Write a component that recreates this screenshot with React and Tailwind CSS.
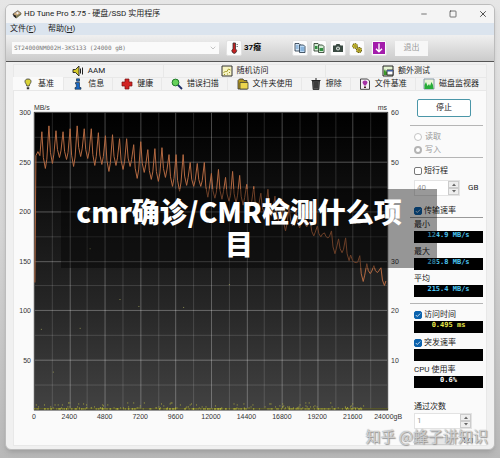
import { useState } from "react";
import { Minus, Square, X, ChevronDown } from "lucide-react";

const PLOT_W = 356;
const PLOT_H = 299;

// MB/s, one peak and the dip after it for each step of the disk
const peaks = [
  280, 286, 281, 280, 283, 286, 283, 283, 279, 276, 277, 273, 273, 267, 270, 262,
  263, 264, 257, 257, 257, 249, 248, 249, 238, 242, 234, 240, 236, 227, 225, 218,
  222, 215, 210, 205, 200, 195, 190, 185, 178, 180, 172, 173, 150, 155, 147, 145,
  143,
];
const dips = [
  243, 248, 254, 252, 245, 255, 253, 246, 247, 240, 246, 242, 245, 233, 239, 232,
  230, 234, 225, 220, 226, 225, 225, 214, 213, 212, 210, 208, 206, 204, 200, 198,
  195, 190, 180, 185, 183, 184, 175, 174, 173, 157, 158, 150, 148, 129, 137, 138,
  125,
];

const toY = (v) => PLOT_H - (v / 300) * PLOT_H;

const buildLine = () => {
  const pts = [
    [1, toY(128)],
    [2, toY(256)],
    [4, toY(260)],
    [6, toY(256)],
  ];
  peaks.forEach((p, i) => {
    const x = 8 + i * 7.1;
    const d = dips[i];
    pts.push([x, toY(p)]);
    pts.push([x + 1.5, toY(d + (p - d) * 0.3)]);
    pts.push([x + 3.5, toY(d)]);
    pts.push([x + 5, toY(d + (p - d) * 0.25)]);
  });
  return pts
    .filter(([x]) => x < PLOT_W)
    .map(([x, y]) => `${x.toFixed(1)},${y.toFixed(1)}`)
    .join(" ");
};

const buildDots = () => {
  let seed = 17;
  const rand = () => {
    seed = (seed * 16807) % 2147483647;
    return seed / 2147483647;
  };
  const dots = [];
  for (let i = 0; i < 330; i++) {
    dots.push([rand() * 332, 298 - Math.floor(rand() ** 5 * 7)]);
  }
  return dots;
};

const strays = [
  [56, 137], [86, 188], [105, 195], [150, 196], [196, 173], [46, 217], [7, 218], [19, 261],
];

const line = buildLine();
const dots = buildDots();

function Chart() {
  return (
    <svg viewBox="-20 -12 398 325" className="block w-full" fontFamily="Liberation Sans, Arial, sans-serif" fontSize="7" fill="#333">
      <defs>
        <linearGradient id="plot" x1="0" y1="0" x2="0" y2="1">
          <stop offset="0" stopColor="#000" />
          <stop offset="0.3" stopColor="#101010" />
          <stop offset="0.65" stopColor="#262626" />
          <stop offset="1" stopColor="#424242" />
        </linearGradient>
      </defs>
      <rect width={PLOT_W} height={PLOT_H} fill="url(#plot)" />
      {Array.from({ length: 19 }, (_, i) => (
        <rect
          key={i}
          x={Math.round(((i + 1) * PLOT_W) / 20)}
          width="1"
          height={PLOT_H}
          fill="#fff"
          opacity={i % 2 ? 0.28 : 0.14}
        />
      ))}
      {Array.from({ length: 11 }, (_, i) => (
        <rect
          key={i}
          y={Math.round(((i + 1) * PLOT_H) / 12)}
          width={PLOT_W}
          height="1"
          fill="#fff"
          opacity={i % 2 ? 0.3 : 0.14}
        />
      ))}
      <path d={`M0.5 ${PLOT_H}V0.5H355.5V${PLOT_H}`} fill="none" stroke="#555" />
      <polyline points={line} fill="none" stroke="#b56a42" strokeWidth="1" />
      <rect y="298" width={PLOT_W} height="1" fill="#66661c" />
      <rect y="299" width={PLOT_W} height="1" fill="#111" />
      {dots.map(([x, y], i) => (
        <rect key={i} x={x} y={y} width="1" height="1" fill="#c8c83c" opacity="0.75" />
      ))}
      {strays.map(([x, y], i) => (
        <rect key={i} x={x} y={y} width="1" height="1" fill="#8a8a50" />
      ))}
      <text x="0" y="-2">MB/s</text>
      <text x="355" y="-2" textAnchor="end">ms</text>
      {[300, 250, 200, 150, 100, 50].map((v) => (
        <text key={v} x="-3" y={toY(v) + 3} textAnchor="end">{v}</text>
      ))}
      {[60, 50, 40, 30, 20, 10].map((v) => (
        <text key={v} x="359" y={toY(v * 5) + 3}>{v}</text>
      ))}
      {Array.from({ length: 11 }, (_, i) => (
        <text key={i} x={(i * PLOT_W) / 10} y="309" textAnchor="middle">
          {i * 2400}
          {i === 10 ? "gB" : ""}
        </text>
      ))}
    </svg>
  );
}

function Icon({ name, className = "size-3" }) {
  const shapes = {
    drive: (
      <>
        <path d="M1 6l6-4 4 3-6 6z" fill="#c9a77a" stroke="#333" strokeWidth=".7" />
        <path d="M1 6l4 2v3L2 9z" fill="#222" />
        <path d="M5 8l6-3v2l-6 4z" fill="#775" />
        <circle cx="6.5" cy="5" r="1.3" fill="#eee" />
      </>
    ),
    speaker: (
      <>
        <path d="M1 4.500h2.500L7 1v10L3.500 7.500H1z" fill="#d5c92c" stroke="#222" strokeWidth=".9" />
        <path d="M8.500 3.500v5M10.500 2.500v7" stroke="#222" />
      </>
    ),
    random: (
      <>
        <path d="M1 1h10v10H1z" fill="#f7f4c4" stroke="#333" />
        <path d="M2.500 8l2-2 1 1 2-3 2 1M3 9.500h1M6 9h1M8 7.500h1" stroke="#a39c28" fill="none" />
      </>
    ),
    extra: (
      <>
        <path d="M1 1h10v10H1z" fill="#e4f2d2" stroke="#222" />
        <path d="M2 10V6l1-2 1 3 1-1v4z" fill="#3a9a2a" />
        <path d="M5 5h6v5H5z" fill="#fff" stroke="#333" />
        <path d="M5 5h6v1.500H5z" fill="#415b9b" />
      </>
    ),
    bulb: (
      <>
        <path d="M6 1c2 0 3 1 3 2.600C9 5 7.500 6 7.200 8H4.800C4.500 6 3 5 3 3.600 3 2 4 1 6 1z" fill="#d9d337" stroke="#333" strokeWidth=".8" />
        <path d="M4.800 9.200h2.400v2H4.800z" fill="#333" />
      </>
    ),
    info: (
      <path d="M4.500.8h3v2.400h-3zM3.500 4.500h4v5H9v1.700H3V9.500h1.300V6h-.8z" fill="#1767c5" stroke="#123" strokeWidth=".6" />
    ),
    health: <path d="M4 1h4v3h3v4H8v3H4V8H1V4h3z" fill="#d22424" stroke="#711" strokeWidth=".7" />,
    scan: (
      <>
        <circle cx="4.500" cy="4.500" r="3.400" fill="#66d25a" stroke="#217a2c" />
        <path d="M7 7l4 4" stroke="#1d2d66" strokeWidth="1.800" />
      </>
    ),
    folder: (
      <>
        <path d="M1 2.500L2.500 1H6l1 1.500h3V11H1z" fill="#b79a1e" stroke="#333" strokeWidth=".8" />
        <path d="M3 4.500h8V11H3z" fill="#ecd54d" stroke="#443" strokeWidth=".8" />
      </>
    ),
    trash: (
      <>
        <path d="M2.500 3h7l-.6 8.500H3.100z" fill="#555" stroke="#222" strokeWidth=".8" />
        <path d="M1.500 2.500h9M5 1h2M5 4v6M7 4v6" stroke="#222" />
      </>
    ),
    fileBench: (
      <>
        <path d="M1.500 1h7l2 2v8.300h-9z" fill="#f4f0f6" stroke="#333" strokeWidth=".9" />
        <path d="M6 2.500c1.800 0 2.500 1 2.500 2S7 6.500 7 7.500H5c0-1-1.500-2-1.500-3s.7-2 2.500-2z" fill="#a431a5" />
        <path d="M5 8.500h2V10H5z" fill="#422" />
      </>
    ),
    monitor: (
      <>
        <path d="M1 1h10v10H1z" fill="#e9f5d6" stroke="#89a" />
        <path d="M1.500 11V7L3 4l1.500 4L6 6l1 2 1.500-4L10 7l.5 4z" fill="#28ad38" />
      </>
    ),
    thermo: (
      <>
        <path d="M5 1h2.500v6a2.300 2.300 0 1 1-2.500 0z" fill="#c62020" stroke="#333" strokeWidth=".8" />
        <path d="M8.500 2.500h1.500M8.500 4.500h1.500" stroke="#555" strokeWidth=".7" />
      </>
    ),
    copyText: (
      <>
        <path d="M1 1.500h4L6.500 3v6H1z" fill="#d4e5f5" stroke="#234" strokeWidth=".8" />
        <path d="M5.500 3h4L11 4.500v6H5.500z" fill="#bcd9f3" stroke="#234" strokeWidth=".8" />
        <path d="M2 4h2.500M2 6h2.500M6.500 6H10M6.500 8H10" stroke="#3b7fbd" strokeWidth=".8" />
      </>
    ),
    copyImage: (
      <>
        <path d="M1 1.500h4L6.500 3v6H1z" fill="#d5ecd5" stroke="#232" strokeWidth=".8" />
        <path d="M5.500 3h4L11 4.500v6H5.500z" fill="#d5ecd5" stroke="#232" strokeWidth=".8" />
        <path d="M2 4h2.500v3H2zM6.500 6H10v3H6.500z" fill="#319040" />
      </>
    ),
    camera: (
      <>
        <path d="M1 3.500h2.500L4.500 2h3l1 1.500H11V10H1z" fill="#3a4a42" />
        <circle cx="6" cy="6.500" r="1.900" fill="#e1e9e5" />
        <circle cx="6" cy="6.500" r=".9" fill="#3a4a42" />
      </>
    ),
    gears: (
      <>
        <circle cx="4" cy="4" r="2.300" fill="#e0d32e" stroke="#766b12" strokeWidth="1.200" strokeDasharray="1.400 .5" />
        <circle cx="8" cy="8" r="2.500" fill="#d1c32a" stroke="#665c10" strokeWidth="1.200" strokeDasharray="1.400 .5" />
        <circle cx="4" cy="4" r=".7" fill="#544" />
        <circle cx="8" cy="8" r=".8" fill="#544" />
      </>
    ),
    down: (
      <>
        <path d="M0 0h12v12H0z" fill="#a31cab" />
        <path d="M6 1.500v8M3 6.800l3 3 3-3" stroke="#fff" strokeWidth="1.400" fill="none" />
      </>
    ),
  };
  return (
    <svg viewBox="0 0 12 12" className={`shrink-0 ${className}`} aria-hidden="true">
      {shapes[name]}
    </svg>
  );
}

function Tab({ icon, label, active }) {
  return (
    <button
      className={`flex min-w-0 items-center justify-center gap-1 whitespace-nowrap border-r border-[#e8e8e8] ${
        active ? "bg-[#fafafa]" : "border-t bg-[#f3f3f3]"
      }`}
    >
      <Icon name={icon} />
      {label}
    </button>
  );
}

function ToolButton({ icon, label }) {
  return (
    <button aria-label={label} className="flex size-4 items-center justify-center rounded-xs border border-[#e2e2e2] bg-[#fcfcfc]">
      <Icon name={icon} />
    </button>
  );
}

function Check({ label, checked, onChange }) {
  return (
    <label className="flex h-[13px] items-center gap-0.5">
      <input type="checkbox" checked={checked} onChange={onChange} className="peer sr-only" />
      <span className="flex size-2 items-center justify-center rounded-xs border border-[#777] bg-white peer-checked:border-[#0b62ad] peer-checked:bg-[#0b62ad]">
        {checked && (
          <svg viewBox="0 0 8 8" className="size-1.5">
            <path d="M1 4l2 2 4-4" stroke="#fff" fill="none" />
          </svg>
        )}
      </span>
      {label}
    </label>
  );
}

function Radio({ label, checked }) {
  return (
    <label className="flex h-[13px] items-center gap-[3px] text-[#999]">
      <input
        type="radio"
        name="mode"
        disabled
        defaultChecked={checked}
        className="size-2 appearance-none rounded-full border border-[#c4c4c4] bg-white checked:border-2 checked:border-[#b4b4b4]"
      />
      {label}
    </label>
  );
}

function Readout({ value, color }) {
  return (
    <output className={`block h-3 bg-black text-center font-['DejaVu_Sans_Mono',monospace] text-[7px] leading-[9px] font-bold ${color}`}>
      {value}
    </output>
  );
}

function Spinner({ label, value, width }) {
  return (
    <div className={`flex h-4 border border-[#e3e3e3] bg-white ${width}`}>
      <input aria-label={label} defaultValue={value} disabled className="w-0 flex-1 px-0.5 text-[#999]" />
      <div className="flex w-[11px] flex-col bg-[#eee]">
        <button aria-label="+" className="flex flex-1 items-center justify-center border border-[#ccc]">
          <svg viewBox="0 0 4 3" className="w-1"><path d="M0 3l2-2.500L4 3z" fill="#666" /></svg>
        </button>
        <button aria-label="-" className="flex flex-1 items-center justify-center border border-[#ccc]">
          <svg viewBox="0 0 4 3" className="w-1"><path d="M0 0l2 2.500L4 0z" fill="#666" /></svg>
        </button>
      </div>
    </div>
  );
}

function SidePanel() {
  const [opts, setOpts] = useState({ short: false, rate: true, access: true, burst: true });
  const toggle = (key) => setOpts({ ...opts, [key]: !opts[key] });

  return (
    <aside className="flex w-[76px] shrink-0 flex-col pt-2 pr-[3px] pl-1">
      <button className="mr-3 ml-[3px] h-[18px] rounded-xs border border-[#4a96a8] bg-white">停止</button>
      <hr className="-ml-1 mt-2 border-[#b5b5b5]" />
      <div className="mt-1">
        <Radio label="读取" />
        <Radio label="写入" checked />
      </div>
      <hr className="-ml-1 mt-px border-[#b5b5b5]" />
      <div className="mt-1.5">
        <Check label="短行程" checked={opts.short} onChange={() => toggle("short")} />
      </div>
      <div className="mt-[3px] flex items-center gap-2">
        <Spinner label="短行程" value="40" width="w-[46px]" />
        GB
      </div>
      <div className="mt-2">
        <Check label="传输速率" checked={opts.rate} onChange={() => toggle("rate")} />
      </div>
      <hr className="-ml-1 border-[#999]" />
      <div className="flex flex-col gap-0.5">
        {[
          ["最小", "124.9 MB/s"],
          ["最大", "285.8 MB/s"],
          ["平均", "215.4 MB/s"],
        ].map(([label, value]) => (
          <div key={label}>
            <p className="h-[13px] leading-[13px]">{label}</p>
            <Readout value={value} color="text-[#4cc6f4]" />
          </div>
        ))}
      </div>
      <hr className="-ml-1 mt-1.5 border-[#b5b5b5]" />
      <div className="mt-1">
        <Check label="访问时间" checked={opts.access} onChange={() => toggle("access")} />
        <Readout value="0.495 ms" color="text-[#e9e94b]" />
      </div>
      <div className="mt-[3px]">
        <Check label="突发速率" checked={opts.burst} onChange={() => toggle("burst")} />
        <Readout value="" color="text-white" />
      </div>
      <div className="mt-0.5">
        <p className="h-[13px] leading-[13px]">CPU 使用率</p>
        <Readout value="0.6%" color="text-white" />
      </div>
      <div className="mt-3">
        <p className="h-[13px] leading-[13px]">通过次数</p>
        <Spinner label="通过次数" value="1" width="w-[58px]" />
      </div>
      <div className="mt-2 flex items-center gap-2">
        <div className="h-2 w-10 border border-[#ccc] bg-[#e6e6e6]" />
        <span className="leading-2">1/1</span>
      </div>
    </aside>
  );
}

function App() {
  return (
    <div className="relative min-h-screen bg-linear-to-b from-[#e6e6e6] via-[#d6d6d6] to-[#b9b9b9] px-[5px] pt-1 pb-1 font-['Roboto','Noto_Sans_CJK_SC',sans-serif] text-[8px] leading-3 text-[#222]">
      <div className="overflow-hidden rounded-md border border-[#bcbcbc] bg-[#f0f0f0] shadow-md">
        <header className="flex h-[18px] items-center bg-[#f4f4f4] px-1.5">
          <Icon name="drive" className="size-2.5" />
          <h1 className="ml-0.5 flex-1">HD Tune Pro 5.75 - 硬盘/SSD 实用程序</h1>
          <div className="flex gap-[21px] text-[#333]">
            <button aria-label="最小化"><Minus className="size-2" /></button>
            <button aria-label="最大化"><Square className="size-2" /></button>
            <button aria-label="关闭"><X className="size-2.5" /></button>
          </div>
        </header>
        <nav className="flex h-3 items-center gap-3 bg-[#dbe4ee] px-1">
          <button>文件(<u>F</u>)</button>
          <button>帮助(<u>H</u>)</button>
        </nav>
        <div className="flex h-[27px] items-center border-b border-[#555] bg-linear-to-b from-[#f0f0f0] to-[#cbcbcb] pl-1.5">
          <div className="relative w-[207px]">
            <select aria-label="硬盘" className="block h-3 w-full appearance-none bg-[#fafafa] px-0.5 font-['DejaVu_Sans_Mono',monospace] text-[6px] leading-3 text-[#777]">
              <option>ST24000NM002H-3KS133 (24000 gB)</option>
            </select>
            <ChevronDown className="pointer-events-none absolute top-0.5 right-0.5 size-2 text-[#aaa]" />
          </div>
          <div className="ml-[7px] flex w-9 items-center gap-0.5 whitespace-nowrap">
            <ToolButton icon="thermo" label="温度" />
            <b className="text-black">37癈</b>
          </div>
          <div className="ml-[30px] flex gap-[3px]">
            <ToolButton icon="copyText" label="复制文本" />
            <ToolButton icon="copyImage" label="复制图像" />
            <ToolButton icon="camera" label="截图" />
            <ToolButton icon="gears" label="选项" />
          </div>
          <div className="ml-1.5">
            <ToolButton icon="down" label="保存" />
          </div>
          <button className="ml-2 h-[15px] w-[33px] bg-[#f7f7f7] text-[#999]">退出</button>
        </div>

        <main className="mx-[7px] mt-0.5 mb-[3px]">
          <div className="grid h-[13px] grid-cols-[150fr_162fr_161fr] border-l border-[#e8e8e8]">
            <Tab icon="speaker" label="AAM" />
            <Tab icon="random" label="随机访问" />
            <Tab icon="extra" label="额外测试" />
          </div>
          <div className="grid h-[13px] grid-cols-[51fr_49fr_49fr_66fr_73fr_49fr_65fr_71fr]">
            <Tab icon="bulb" label="基准" active />
            <Tab icon="info" label="信息" />
            <Tab icon="health" label="健康" />
            <Tab icon="scan" label="错误扫描" />
            <Tab icon="folder" label="文件夹使用" />
            <Tab icon="trash" label="擦除" />
            <Tab icon="fileBench" label="文件基准" />
            <Tab icon="monitor" label="磁盘监视器" />
          </div>
          <div className="flex border border-[#e8e8e8] bg-[#fafafa]">
            <div className="min-w-0 flex-1 pt-[9px]">
              <Chart />
            </div>
            <SidePanel />
          </div>
        </main>
      </div>

      <div className="absolute top-[189px] right-[63px] left-[61px] bg-black/40 pt-1.5 pr-8 pb-[9px] pl-3 text-center font-['Noto_Sans_CJK_SC',sans-serif] text-[28px] leading-8 font-black text-white">
        cmr确诊/CMR检测什么项目
      </div>
      <p className="absolute right-3 bottom-3 font-['Noto_Sans_CJK_SC',sans-serif] text-[15px] leading-5 text-white/60 [text-shadow:0_0_1px_#777,1px_1px_1px_#999]">
        知乎 @蜂子讲知识
      </p>
    </div>
  );
}

export default App;
